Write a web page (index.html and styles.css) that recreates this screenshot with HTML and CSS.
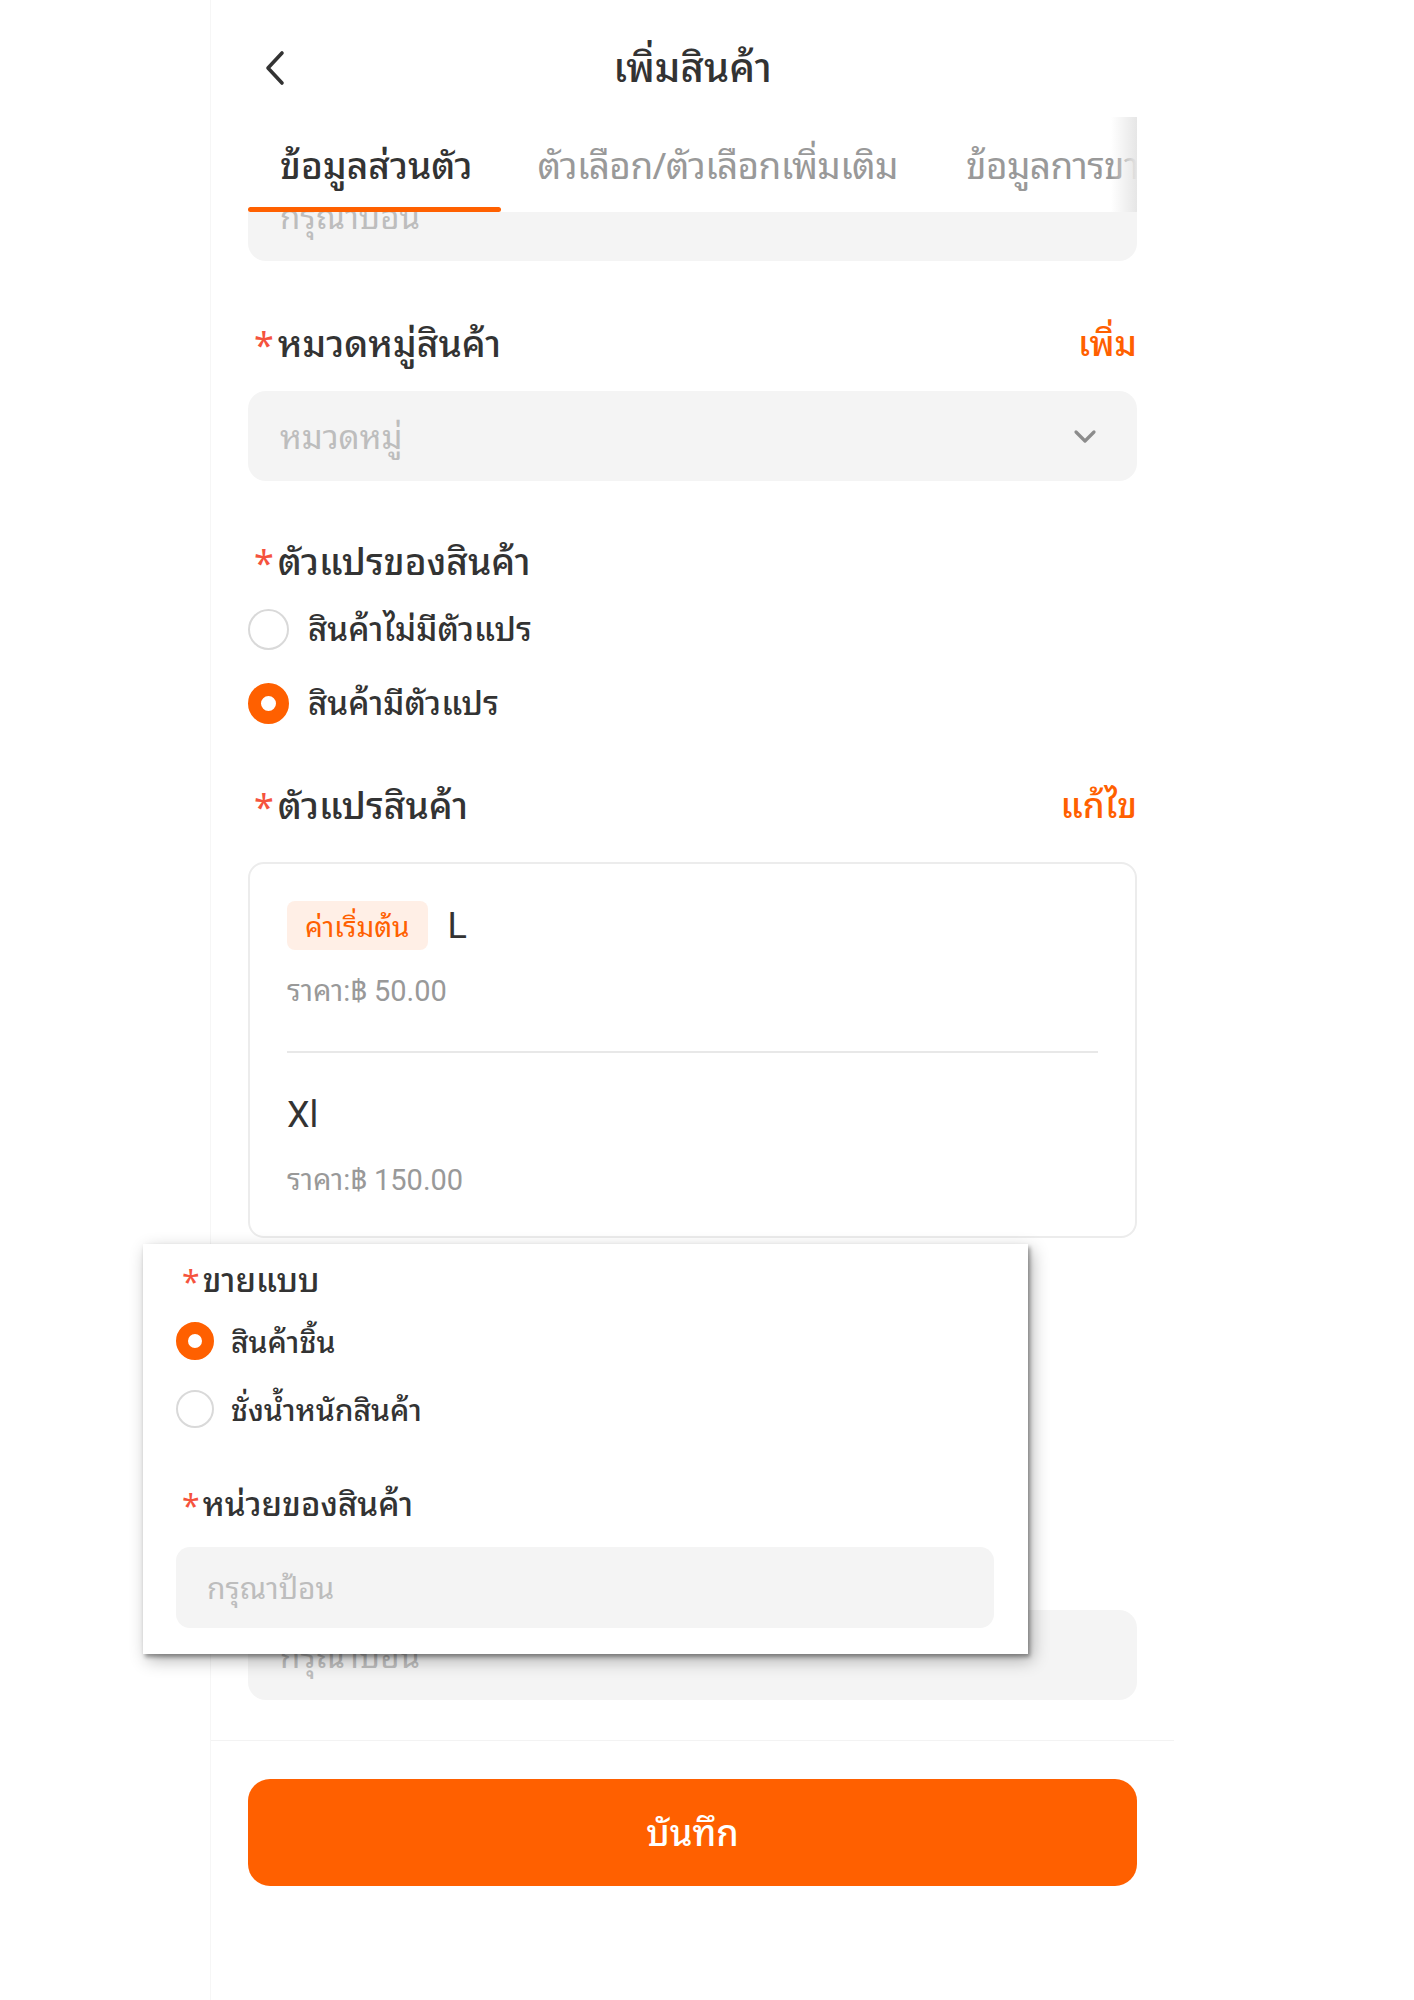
FILE: index.html
```html
<!DOCTYPE html>
<html lang="th">
<head>
<meta charset="utf-8">
<title>เพิ่มสินค้า</title>
<link rel="stylesheet" href="styles.css">
</head>
<body>
<div class="phone">
  <header class="topbar">
    <span class="back">
      <svg width="24" height="36" viewBox="0 0 24 36"><path d="M19 3 L5 18 L19 33" fill="none" stroke="#333" stroke-width="3.6" stroke-linecap="round" stroke-linejoin="round"/></svg>
    </span>
    <h1 class="title">เพิ่มสินค้า</h1>
  </header>

  <nav class="tabs">
    <div class="tab active">ข้อมูลส่วนตัว</div>
    <div class="tab">ตัวเลือก/ตัวเลือกเพิ่มเติม</div>
    <div class="tab">ข้อมูลการขาย</div>
  </nav>

  <main class="scroll">
    <div class="input first"><span class="ph">กรุณาป้อน</span></div>

    <div class="label-row mt58">
      <div class="label"><span class="req">*</span>หมวดหมู่สินค้า</div>
      <div class="link">เพิ่ม</div>
    </div>
    <div class="input select">
      <span class="ph">หมวดหมู่</span>
      <svg class="chev" width="24" height="15" viewBox="0 0 24 15"><path d="M3 3 L12 12 L21 3" fill="none" stroke="#8c8c8c" stroke-width="3.2" stroke-linecap="round" stroke-linejoin="round"/></svg>
    </div>

    <div class="label-row mt56">
      <div class="label"><span class="req">*</span>ตัวแปรของสินค้า</div>
    </div>
    <div class="radio-row r1"><span class="radio"></span><span class="rtext">สินค้าไม่มีตัวแปร</span></div>
    <div class="radio-row r2"><span class="radio on"></span><span class="rtext">สินค้ามีตัวแปร</span></div>

    <div class="label-row mt48">
      <div class="label"><span class="req">*</span>ตัวแปรสินค้า</div>
      <div class="link">แก้ไข</div>
    </div>

    <div class="card">
      <div class="variant first-v">
        <div class="v-head"><span class="badge">ค่าเริ่มต้น</span><span class="v-name">L</span></div>
        <div class="price">ราคา:฿ 50.00</div>
      </div>
      <div class="variant">
        <div class="v-head"><span class="v-name">Xl</span></div>
        <div class="price">ราคา:฿ 150.00</div>
      </div>
    </div>

    <div class="hidden-section"></div>

    <div class="input last"><span class="ph">กรุณาป้อน</span></div>
  </main>

  <footer class="bottom">
    <button class="save">บันทึก</button>
  </footer>
</div>

<section class="popup">
  <div class="p-label"><span class="req">*</span>ขายแบบ</div>
  <div class="p-radio pr1"><span class="radio small on"></span><span class="rtext">สินค้าชิ้น</span></div>
  <div class="p-radio pr2"><span class="radio small"></span><span class="rtext">ชั่งน้ำหนักสินค้า</span></div>
  <div class="p-label pl2"><span class="req">*</span>หน่วยของสินค้า</div>
  <div class="p-input"><span class="ph">กรุณาป้อน</span></div>
</section>
</body>
</html>
```

FILE: styles.css
```css
* { box-sizing: border-box; }
html, body { margin: 0; padding: 0; background: #fff; }
body {
  font-family: "Noto Sans Thai Looped", "Noto Sans Thai", "Noto Sans", "DejaVu Sans", sans-serif;
  color: #333;
  width: 1414px;
  height: 2000px;
  overflow: hidden;
  position: relative;
}
.phone {
  width: 964px;
  margin-left: 210px;
  height: 2000px;
  border-left: 1px solid #f6f6f6;
  display: flex;
  flex-direction: column;
}
.topbar {
  height: 117px;
  position: relative;
  display: flex;
  align-items: center;
  justify-content: center;
}
.back {
  position: absolute;
  left: 52px;
  top: 50px;
  width: 24px;
  height: 36px;
  display: block;
}
.back svg { display: block; }
.title {
  margin: 0;
  font-size: 40px;
  font-weight: 500;
  line-height: 54px;
  color: #333;
  margin-top: 11px;
}
.tabs {
  height: 95px;
  margin: 0 37px;
  display: flex;
  align-items: center;
  overflow: hidden;
  white-space: nowrap;
  position: relative;
  background: #fff;
  z-index: 2;
}
.tabs::after {
  content: "";
  position: absolute;
  right: 0;
  top: 0;
  bottom: 0;
  width: 26px;
  background: linear-gradient(to right, rgba(255,255,255,0), #e6e6e6);
}
.tab {
  font-size: 37px;
  color: #999;
  line-height: 92px;
  height: 95px;
  margin-right: 68px;
  position: relative;
  flex-shrink: 0;
  letter-spacing: -0.6px;
}
.tab.active {
  color: #333;
  font-weight: 500;
  padding: 0 28px 0 32px;
  margin-right: 37px;
  letter-spacing: 0;
}
.tab.active::after {
  content: "";
  position: absolute;
  left: 0;
  right: 0;
  bottom: 0;
  height: 5px;
  border-radius: 3px;
  background: #ff6000;
}
.scroll {
  flex: 1;
  overflow: hidden;
  padding: 0 37px;
}
.input {
  height: 90px;
  background: #f4f4f4;
  border-radius: 18px;
  display: flex;
  align-items: center;
  padding: 0 32px 4px;
  font-size: 33px;
}
.input.first { margin-top: -41px; }
.ph { color: #bdbdbd; }
.select { justify-content: space-between; margin-top: 22px; }
.chev { display: block; margin-right: 8px; margin-top: 4px; }
.label-row {
  height: 50px;
  padding-bottom: 8px;
  display: flex;
  align-items: center;
  justify-content: space-between;
}
.mt58 { margin-top: 58px; }
.mt56 { margin-top: 56px; }
.mt48 { margin-top: 48px; }
.label {
  font-size: 37px;
  font-weight: 500;
  color: #333;
  display: flex;
  align-items: center;
}
.req {
  color: #f5533d;
  font-size: 36px;
  margin: 4px 4px 0 6px;
  font-weight: 400;
}
.link {
  font-size: 35px;
  color: #ff6000;
  font-weight: 500;
}
.radio-row {
  height: 60px;
  display: flex;
  align-items: center;
  font-size: 33px;
  color: #333;
  font-weight: 500;
}
.rtext { padding-bottom: 5px; }
.r1 { margin-top: 12px; }
.r2 { margin-top: 14px; }
.radio {
  width: 41px;
  height: 41px;
  border-radius: 50%;
  border: 2px solid #d9d9d9;
  background: #fff;
  margin-right: 19px;
  flex-shrink: 0;
}
.radio.on {
  border: 13px solid #ff6000;
  background: #fff;
}
.card {
  margin-top: 31px;
  border: 2px solid #ececec;
  border-radius: 16px;
  padding: 0 37px;
  height: 376px;
}
.variant { padding-top: 37px; padding-bottom: 37px; }
.variant.first-v { border-bottom: 2px solid #e8e8e8; padding-bottom: 39px; }
.v-head {
  height: 49px;
  display: flex;
  align-items: center;
}
.badge {
  height: 49px;
  padding: 0 18px 3px;
  border-radius: 8px;
  background: #ffefe6;
  color: #ff6000;
  font-size: 28px;
  display: flex;
  align-items: center;
  margin-right: 20px;
}
.v-name {
  font-family: "Roboto", "Liberation Sans", sans-serif;
  font-size: 36px;
  color: #333;
}
.price {
  margin-top: 22px;
  height: 40px;
  line-height: 38px;
  font-size: 29px;
  color: #999;
  font-family: "Roboto", "Noto Sans Thai Looped", "Noto Sans Thai", sans-serif;
}
.hidden-section { height: 372px; }
.input.last { margin-top: 0; }
.bottom {
  height: 260px;
  border-top: 1px solid #f3f3f3;
  padding: 38px 37px 0;
  flex-shrink: 0;
}
.save {
  width: 100%;
  height: 107px;
  border: none;
  border-radius: 22px;
  background: #ff6000;
  color: #fff;
  font-family: inherit;
  font-size: 36px;
  font-weight: 500;
  padding: 0 0 6px;
}
.popup {
  position: absolute;
  left: 143px;
  top: 1244px;
  width: 885px;
  height: 410px;
  background: #fff;
  box-shadow: 2px 3px 4px rgba(0,0,0,0.35), 4px 6px 16px rgba(0,0,0,0.3);
  padding: 14px 34px 26px 33px;
  display: flex;
  flex-direction: column;
}
.p-label {
  height: 44px;
  padding-bottom: 5px;
  display: flex;
  align-items: center;
  font-size: 33px;
  font-weight: 500;
  color: #333;
}
.p-label .req { margin: 4px 3px 0 6px; font-size: 32px; }
.pl2 { margin-top: 51px; }
.p-radio {
  height: 44px;
  display: flex;
  align-items: center;
  font-size: 30px;
  font-weight: 500;
  color: #333;
}
.p-radio .rtext { padding-bottom: 4px; }
.pr1 { margin-top: 17px; }
.pr2 { margin-top: 24px; }
.radio.small { width: 38px; height: 38px; margin-right: 17px; }
.radio.small.on { border-width: 12px; }
.p-input {
  margin-top: 21px;
  height: 81px;
  background: #f4f4f4;
  border-radius: 14px;
  display: flex;
  align-items: center;
  padding: 0 31px 4px;
  font-size: 30px;
}
```
